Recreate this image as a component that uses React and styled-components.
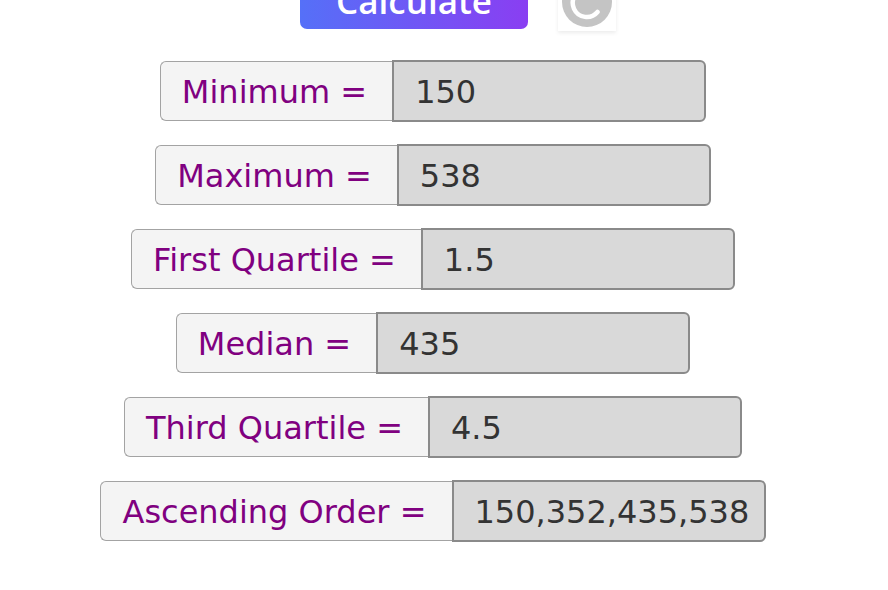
import React from "react";
import styled, { createGlobalStyle } from "styled-components";

const GlobalStyle = createGlobalStyle`
  html, body {
    margin: 0;
    padding: 0;
    background: #ffffff;
    overflow: hidden;
  }
  body {
    font-family: "DejaVu Sans", Verdana, sans-serif;
  }
`

const results = [
    { label: "Minimum", value: "150" },
    { label: "Maximum", value: "538" },
    { label: "First Quartile", value: "1.5" },
    { label: "Median", value: "435" },
    { label: "Third Quartile", value: "4.5" },
    { label: "Ascending Order", value: "150,352,435,538" },
]

// grey refresh disc, only its lower half is on screen
const ResetIcon = () => (
    <svg width="50" height="50" viewBox="0 0 50 50">
        <circle cx="25" cy="25" r="25" fill="#c4c4c4" />
        <path d="M25 12 A14 14 0 1 0 35.5 35" fill="none" stroke="#ffffff" strokeWidth="4.5" strokeLinecap="round" />
    </svg>
)

const App = () => {
    return (
        <Page>
            <GlobalStyle />
            <ButtonBar>
                <CalcButton type="button">Calculate</CalcButton>
                <ResetButton type="button" aria-label="reset">
                    <ResetIcon />
                </ResetButton>
            </ButtonBar>
            <ResultList>
                {results.map(r => (
                    <ResultRow key={r.label}>
                        <Label>{r.label} =</Label>
                        <ValueBox>{r.value}</ValueBox>
                    </ResultRow>
                ))}
            </ResultList>
        </Page>
    )
}

const Page = styled.div`
    width: 866px;
    height: 590px;
    display: flex;
    flex-direction: column;
    align-items: center;
    overflow: hidden;
`
const ButtonBar = styled.div`
    display: flex;
    align-items: flex-end;
    gap: 30px;
    margin-top: -31px;
    margin-left: 50px;
`
const CalcButton = styled.button`
    width: 228px;
    height: 60px;
    border: none;
    border-radius: 7px;
    background: linear-gradient(90deg, #5570f8 0%, #8a3ef2 100%);
    color: #ffffff;
    font-family: "Open Sans", Lato, sans-serif;
    font-size: 35px;
    font-weight: 600;
    line-height: 35px;
    display: flex;
    align-items: flex-end;
    justify-content: center;
    padding: 0 0 11px;
    box-sizing: border-box;
`
const ResetButton = styled.button`
    width: 58px;
    height: 60px;
    border: none;
    background: #ffffff;
    box-shadow: 0 2px 4px rgba(0,0,0,0.08);
    padding: 0 0 4px;
    box-sizing: border-box;
    display: flex;
    align-items: flex-end;
    justify-content: center;
    margin-bottom: -2px;
`
const ResultList = styled.div`
    display: flex;
    flex-direction: column;
    align-items: center;
    gap: 22px;
    margin-top: 31px;
`
const ResultRow = styled.div`
    display: flex;
    align-items: center;
`
const Label = styled.div`
    height: 60px;
    box-sizing: border-box;
    display: flex;
    align-items: center;
    padding: 2px 25px 0 21px;
    background: #f4f4f4;
    border: 1px solid #a3a3a3;
    border-right: none;
    border-radius: 6px 0 0 6px;
    color: #800080;
    font-size: 32px;
    white-space: nowrap;
`
const ValueBox = styled.div`
    width: 314px;
    height: 62px;
    box-sizing: border-box;
    display: flex;
    align-items: center;
    padding: 2px 8px 0 21px;
    background: #d9d9d9;
    border: 2px solid #8a8a8a;
    border-radius: 0 6px 6px 0;
    color: #333333;
    font-size: 32px;
    white-space: nowrap;
`

export default App
